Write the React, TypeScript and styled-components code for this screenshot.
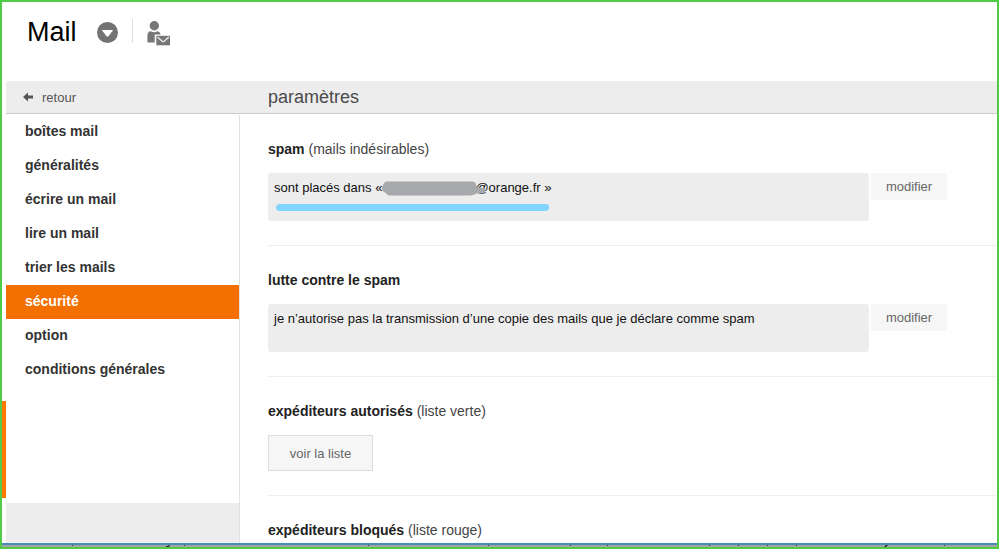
import React from "react";
import styled, { createGlobalStyle } from "styled-components";

const GlobalStyle = createGlobalStyle`
  * { box-sizing: border-box; }
  body {
    margin: 0;
    background: #fff;
    color: #222;
    font-family: "Liberation Sans", Arial, sans-serif;
    font-size: 14px;
  }
  button { font-family: inherit; cursor: pointer; }
`;

const Frame = styled.div`
  display: flex;
  flex-direction: column;
  min-height: 100vh;
  border: 2px solid #50cc46;
`;

const Window = styled.div`
  flex: 1;
  display: flex;
`;

const Gutter = styled.div`
  width: 4px;
  display: flex;
  flex-direction: column;
  justify-content: flex-end;
  padding-bottom: 45px;
`;

const GutterMark = styled.div`
  height: 97px;
  background: #ff7900;
`;

const Page = styled.div`
  flex: 1;
  min-width: 0;
  display: flex;
  flex-direction: column;
`;

const Header = styled.header`
  display: flex;
  align-items: flex-start;
  height: 79px;
  padding: 14px 20px 0 21px;
`;

const Title = styled.h1`
  margin: 0;
  width: 70px;
  font-size: 27px;
  line-height: 32px;
  font-weight: 400;
  color: #000;
`;

const IconButton = styled.button`
  display: flex;
  margin-top: 2px;
  padding: 0;
  border: 0;
  background: none;
`;

const Divider = styled.span`
  width: 1px;
  height: 24px;
  margin: 3px 14px 0 13px;
  background: #ddd;
`;

const Bar = styled.div`
  display: flex;
  align-items: center;
  height: 33px;
  background: #ededed;
  border-bottom: 1px solid #ccc;
`;

const Back = styled.a`
  display: flex;
  align-items: center;
  gap: 8px;
  width: 262px;
  padding-left: 17px;
  font-size: 13px;
  color: #555;
  text-decoration: none;
`;

const BarTitle = styled.h2`
  margin: 0;
  font-size: 18px;
  font-weight: 400;
  color: #4a4a4a;
`;

const Columns = styled.div`
  flex: 1;
  display: flex;
`;

const Sidebar = styled.nav`
  display: flex;
  flex-direction: column;
  width: 234px;
  margin-top: 1px;
  border-right: 1px solid #e2e2e2;
`;

const NavItem = styled.a<{ $active?: boolean }>`
  height: 34px;
  padding-left: 19px;
  line-height: 33px;
  font-weight: 700;
  text-decoration: none;
  color: ${(p) => (p.$active ? "#fff" : "#333")};
  background: ${(p) => (p.$active ? "#f26f00" : "transparent")};
`;

const SidebarFooter = styled.div`
  height: 40px;
  margin-top: auto;
  background: #ededed;
`;

const Main = styled.main`
  flex: 1;
  min-width: 0;
  margin-top: 1px;
  padding-left: 28px;
`;

const Section = styled.section`
  padding: 24px 0;
  border-bottom: 1px solid #eee;

  &:last-child {
    padding-bottom: 0;
    border-bottom: 0;
  }
`;

const SectionTitle = styled.h3`
  margin: 0;
  font-size: 14px;
  line-height: 20px;
  font-weight: 700;
  color: #222;
`;

const Hint = styled.span`
  font-weight: 400;
  color: #444;
`;

const SettingRow = styled.div`
  display: flex;
  gap: 2px;
  margin-top: 14px;
  padding-right: 50px;
`;

const Value = styled.div`
  flex: 1;
  height: 48px;
  padding: 6px;
  border-radius: 3px;
  background: #ededed;
  font-size: 13px;
  line-height: 18px;
  color: #111;
`;

const Underlined = styled.div`
  display: inline-flex;
  flex-direction: column;
  gap: 7px;
`;

const Highlight = styled.span`
  height: 7px;
  margin: 0 2px;
  border-radius: 4px;
  background: #80d4ff;
`;

const Redaction = styled.span`
  position: relative;
  display: inline-block;
  width: 93px;
  height: 12px;

  svg {
    position: absolute;
    left: 0;
    top: 0;
  }
`;

const EditButton = styled.button`
  width: 76px;
  height: 27px;
  align-self: flex-start;
  padding: 0;
  border: 0;
  background: #f6f6f6;
  font-size: 13px;
  color: #666;
`;

const ListButton = styled.button`
  width: 105px;
  height: 36px;
  display: block;
  margin-top: 14px;
  padding: 0;
  border: 1px solid #ddd;
  background: #f6f6f6;
  font-size: 13px;
  color: #666;
`;

const BottomEdge = styled.div`
  height: 4px;
  border-top: 2px solid #4a8cbc;
  background: #a3a3a0;

  svg { display: block; width: 100%; }
`;

const navItems = [
  "boîtes mail",
  "généralités",
  "écrire un mail",
  "lire un mail",
  "trier les mails",
  "sécurité",
  "option",
  "conditions générales",
];

const edgeMarks = [72, 184, 368, 488, 570, 607, 709, 738, 767, 796, 944];

export default function App() {
  return (
    <>
      <GlobalStyle />
      <Frame>
        <Window>
          <Gutter>
            <GutterMark />
          </Gutter>
          <Page>
            <Header>
              <Title>Mail</Title>
              <IconButton aria-label="menu">
                <svg width="22" height="26" viewBox="0 0 22 26">
                  <circle cx="10.5" cy="14.5" r="10.5" fill="#737373" />
                  <path d="M4.8 12h11.4l-4.5 6q-1.2 1.2-2.4 0z" fill="#fff" />
                </svg>
              </IconButton>
              <Divider />
              <IconButton aria-label="contacts">
                <svg width="24" height="30" viewBox="0 0 24 30" fill="#777">
                  <circle cx="7.3" cy="7.7" r="4.7" />
                  <path d="M.4 24V17.5Q.4 13.5 4 13.3Q7 15 10.5 13.3Q13.5 14 13.7 16.5H7.7V24.5H2.5Q.4 24.5 .4 24Z" />
                  <path d="M9.3 17.8h13.7v9.5H9.3z" />
                  <path d="M10.5 19l4.7 4.2q1 .8 2 0l4.7-4.2" fill="none" stroke="#eee" strokeWidth="1.3" />
                </svg>
              </IconButton>
            </Header>
            <Bar>
              <Back href="#retour">
                <svg width="11" height="10" viewBox="0 0 11 10">
                  <path d="M0 5l5-4.5v3h5v3H5v3z" fill="#555" />
                </svg>
                retour
              </Back>
              <BarTitle>paramètres</BarTitle>
            </Bar>
            <Columns>
              <Sidebar>
                {navItems.map((label) => (
                  <NavItem key={label} href="#" $active={label === "sécurité"}>
                    {label}
                  </NavItem>
                ))}
                <SidebarFooter />
              </Sidebar>
              <Main>
                <Section>
                  <SectionTitle>
                    spam <Hint>(mails indésirables)</Hint>
                  </SectionTitle>
                  <SettingRow>
                    <Value>
                      <Underlined>
                        <span>
                          sont placés dans «
                          <Redaction>
                            <svg width="105" height="16" viewBox="0 0 105 16">
                              <path
                                d="M4 1.5H90Q94 1.5 94 5Q94 8 102 8Q105 10 102 13.5H94Q92 15.5 88 15.5H8Q5 15.5 4 13Q0 12 0 8Q1 3 4 1.5Z"
                                fill="#a7a8ab"
                              />
                            </svg>
                          </Redaction>
                          @orange.fr »
                        </span>
                        <Highlight />
                      </Underlined>
                    </Value>
                    <EditButton>modifier</EditButton>
                  </SettingRow>
                </Section>
                <Section>
                  <SectionTitle>lutte contre le spam</SectionTitle>
                  <SettingRow>
                    <Value>
                      je n’autorise pas la transmission d’une copie des mails
                      que je déclare comme spam
                    </Value>
                    <EditButton>modifier</EditButton>
                  </SettingRow>
                </Section>
                <Section>
                  <SectionTitle>
                    expéditeurs autorisés <Hint>(liste verte)</Hint>
                  </SectionTitle>
                  <ListButton>voir la liste</ListButton>
                </Section>
                <Section>
                  <SectionTitle>
                    expéditeurs bloqués <Hint>(liste rouge)</Hint>
                  </SectionTitle>
                </Section>
              </Main>
            </Columns>
          </Page>
        </Window>
        <BottomEdge>
          <svg height="2" viewBox="0 0 995 2" preserveAspectRatio="none">
            {edgeMarks.map((x) => (
              <rect key={x} x={x - 2} y="0" width="1" height="1" fill="#333" />
            ))}
            <path d="M164 2h3l1-2h-1l-1 1h-2zM882 2h2l2-2h-2z" fill="#222" />
          </svg>
        </BottomEdge>
      </Frame>
    </>
  );
}
